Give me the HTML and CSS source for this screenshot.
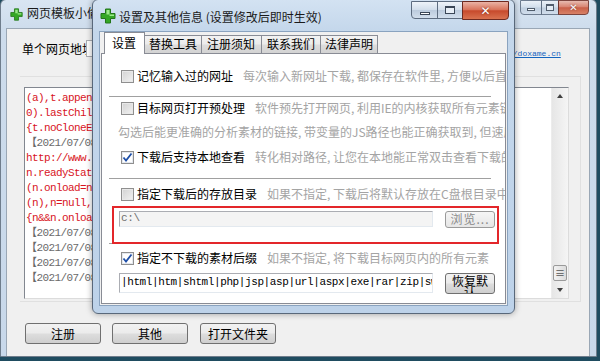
FILE: index.html
```html
<!DOCTYPE html>
<html>
	<head>
		<meta charset="utf-8">
		<title>网页模板小偷</title>
		<link rel="stylesheet" href="styles.css">
	</head>
	<body>
		<div class="desk">
			<!-- 主窗口 -->
			<div class="win main">
				<div class="caption">
					<svg class="ico" width="13" height="13" viewBox="0 0 16 16"><path d="M5.5 1h5v4.5H15v5h-4.5V15h-5v-4.5H1v-5h4.5z" fill="#34a724" stroke="#23761a"/><path d="M6.5 2h3v4.5h4.5v1.5H9.5V6.5h-3z" fill="#9be88a"/></svg>
					<span class="cap-text">网页模板小偷 v3.0</span>
					<div class="cap-btns small">
						<span class="cb-min"><i></i></span>
						<span class="cb-max"><i></i></span>
						<span class="cb-close">✕</span>
					</div>
				</div>
				<div class="client">
					<div class="url-row">
						<span class="url-label">单个网页地址</span>
						<span class="url-input"></span>
						<a class="url-link" href="javascript:;">http://doxame.cn</a>
					</div>
					<div class="log-group">
						<div class="log">
							<div class="log-text">
								<p class="red">(a),t.appendChild(s),e.getElementsByTagName("td"),n.style.cssText</p>
								<p class="red">0).lastChild.checked,t.innerHTML="&lt;textarea&gt;x&lt;/textarea&gt;"</p>
								<p class="red">{t.noCloneEvent=!1}),t.cloneNode(!0).click()</p>
								<p class="gray">【2021/07/08 10:21:33】下载完成</p>
								<p class="red">http://www.doxame.cn/js/jquery.min.js</p>
								<p class="red">n.readyState&amp;&amp;!/loaded|complete/.test(n.readyState)</p>
								<p class="red">(n.onload=n.onreadystatechange=null,o&amp;&amp;n.parentNode</p>
								<p class="red">(n),n=null,i||r(200,"success"))},n.src=e.url,o.insertBefore(n,o.firstChild)</p>
								<p class="red">{n&amp;&amp;n.onload(void 0,!0)}}}})</p>
								<p class="gray">【2021/07/08 10:21:34】下载完成</p>
								<p class="gray">【2021/07/08 10:21:34】下载完成</p>
								<p class="gray">【2021/07/08 10:21:35】下载完成</p>
								<p class="gray">【2021/07/08 10:21:35】全部完成</p>
							</div>
							<div class="vscroll">
								<span class="arrow up"></span>
								<span class="track"><span class="thumb">≡</span></span>
								<span class="arrow down"></span>
							</div>
						</div>
					</div>
					<div class="btn-row">
						<button class="btn">注册</button>
						<button class="btn">其他</button>
						<button class="btn">打开文件夹</button>
					</div>
				</div>
			</div>

			<!-- 设置对话框 -->
			<div class="win dlg">
				<div class="caption">
					<svg class="ico" width="16" height="16" viewBox="0 0 16 16"><path d="M5.5 1h5v4.5H15v5h-4.5V15h-5v-4.5H1v-5h4.5z" fill="#34a724" stroke="#23761a"/><path d="M6.5 2h3v4.5h4.5v1.5H9.5V6.5h-3z" fill="#9be88a"/></svg>
					<span class="cap-text">设置及其他信息 (设置修改后即时生效)</span>
					<div class="cap-btns">
						<span class="cb-min"><i></i></span>
						<span class="cb-max"><i></i></span>
						<span class="cb-close">✕</span>
					</div>
				</div>
				<div class="dlg-client">
					<div class="tabs">
						<span class="tab on">设置</span>
						<span class="tab">替换工具</span>
						<span class="tab">注册须知</span>
						<span class="tab">联系我们</span>
						<span class="tab">法律声明</span>
					</div>
					<div class="panel">
						<div class="row r1">
							<span class="chk"></span>
							<span class="lbl">记忆输入过的网址</span>
							<span class="desc">每次输入新网址下载, 都保存在软件里, 方便以后直接选择</span>
						</div>
						<div class="sep s1"></div>
						<div class="row r2">
							<span class="chk"></span>
							<span class="lbl">目标网页打开预处理</span>
							<span class="desc">软件预先打开网页, 利用IE的内核获取所有元素链接,</span>
						</div>
						<div class="desc-more">勾选后能更准确的分析素材的链接, 带变量的JS路径也能正确获取到, 但速度会慢一些<br>建议默认勾选此项</div>
						<div class="row r3">
							<span class="chk on"><svg width="11" height="11" viewBox="0 0 11 11"><path d="M1.5 5.5l2.5 3L9.5 1.5" fill="none" stroke="#1e4fa8" stroke-width="1.8"/></svg></span>
							<span class="lbl">下载后支持本地查看</span>
							<span class="desc">转化相对路径, 让您在本地能正常双击查看下载的网页</span>
						</div>
						<div class="sep s2"></div>
						<div class="row r4">
							<span class="chk"></span>
							<span class="lbl">指定下载后的存放目录</span>
							<span class="desc">如果不指定, 下载后将默认存放在C盘根目录中</span>
						</div>
						<div class="field-row f1">
							<span class="field off">c:\</span>
							<span class="sbtn off">浏览...</span>
						</div>
						<div class="sep s3"></div>
						<div class="row r5">
							<span class="chk on"><svg width="11" height="11" viewBox="0 0 11 11"><path d="M1.5 5.5l2.5 3L9.5 1.5" fill="none" stroke="#1e4fa8" stroke-width="1.8"/></svg></span>
							<span class="lbl">指定不下载的素材后缀</span>
							<span class="desc">如果不指定, 将下载目标网页内的所有元素</span>
						</div>
						<div class="field-row f2">
							<span class="field">|html|htm|shtml|php|jsp|asp|url|aspx|exe|rar|zip|swf|</span>
							<span class="sbtn wrap">恢复默认</span>
						</div>
						<div class="mark"></div>
					</div>
				</div>
			</div>
		</div>
	</body>
</html>
```

FILE: styles.css
```css
*{
	margin: 0;
	padding: 0;
	box-sizing: border-box;
}
body{
	width: 600px;
	height: 361px;
	overflow: hidden;
	font-family: "Noto Sans CJK SC", sans-serif;
	font-size: 12px;
	color: #000;
	background: #1f4c60;
}
.desk{
	position: relative;
	width: 600px;
	height: 361px;
}

/* 窗口外框 */
.win{
	position: absolute;
	display: flex;
	flex-direction: column;
	border: 1px solid #6f7d8c;
	border-radius: 6px 6px 0 0;
	background: linear-gradient(#d9e5f2, #cddcec 30px, #c8d8ea);
}
.main{
	left: 0;
	top: -1px;
	width: 597px;
	height: 358px;
	padding: 0 6px 0 5px;
}
.dlg{
	left: 92px;
	top: -1px;
	width: 423px;
	height: 315px;
	padding: 0 6px 7px 6px;
	border-color: #59687a;
	border-radius: 6px;
	box-shadow: 0 0 6px rgba(0,0,0,0.35);
	background: linear-gradient(#d3e2f2, #c4d7eb 31px, #bdd2e9);
}
.caption{
	display: flex;
	align-items: center;
	flex-shrink: 0;
}
.main .caption{
	height: 28px;
	padding-left: 4px;
}
.dlg .caption{
	height: 31px;
	padding-left: 1px;
}
.ico{
	flex-shrink: 0;
}
.cap-text{
	margin-left: 4px;
	white-space: nowrap;
	line-height: 14px;
	color: #1a1a1a;
}
.main .cap-text{
	margin-top: -2px;
}
.dlg .cap-text{
	margin-left: 3px;
	margin-top: 2px;
}

/* 标题栏按钮 */
.cap-btns{
	display: flex;
	margin-left: auto;
	align-self: flex-start;
	margin-top: 1px;
	margin-right: -1px;
}
.cap-btns span{
	display: flex;
	align-items: center;
	justify-content: center;
	height: 18px;
	border: 1px solid #5d6c80;
	margin-left: -1px;
	background: linear-gradient(#eef3f9, #d2deeb 48%, #bccbdd 52%, #d2deec);
}
.cb-min{
	width: 27px;
	border-radius: 0 0 0 4px;
}
.cb-min i{
	width: 10px;
	height: 3px;
	margin-top: 6px;
	border: 1px solid #3a4656;
	background: #fff;
}
.cb-max{
	width: 26px;
}
.cb-max i{
	width: 10px;
	height: 8px;
	border: 1px solid #3a4656;
	border-top-width: 2px;
	background: #e7eef6;
}
.cap-btns .cb-close{
	width: 47px;
	height: 19px;
	border-color: #6e2a20;
	border-radius: 0 0 4px 0;
	background: linear-gradient(#eab3a5, #d9755d 45%, #c74a2c 52%, #d97250);
	color: #fff;
	font-family: "DejaVu Sans", sans-serif;
	font-size: 12px;
	font-weight: bold;
	text-shadow: 0 0 2px #6a1a0a;
}
.small{
	margin-top: 0;
	margin-right: 1px;
}
.small span{
	height: 15px;
	opacity: 0.85;
}
.small .cb-min{
	width: 22px;
}
.small .cb-max{
	width: 18px;
}
.small .cb-max i{
	width: 8px;
	height: 7px;
}
.small .cb-min i{
	width: 8px;
	margin-top: 4px;
}
.cap-btns.small .cb-close{
	width: 31px;
	height: 15px;
	font-size: 10px;
}

/* 主窗口内容 */
.client{
	flex: 1;
	background: #f0f0f0;
	border: 1px solid #9aa7b5;
	border-bottom: none;
}
.url-row{
	display: flex;
	align-items: center;
	height: 17px;
	margin-top: 11px;
	padding-left: 15px;
}
.url-label{
	width: 64px;
	overflow: hidden;
	white-space: nowrap;
	line-height: 14px;
}
.url-input{
	width: 386px;
	height: 17px;
	background: #fff;
	border: 1px solid #abadb3;
}
.url-link{
	margin-left: 12px;
	margin-top: 10px;
	font-family: "Liberation Mono", monospace;
	font-size: 8px;
	color: #1565c0;
}
.log-group{
	width: 561px;
	height: 226px;
	margin: 19px 0 0 13px;
	padding: 10px 0 0 4px;
	border: 1px solid #e0e0e0;
	border-left: none;
}
.log{
	display: flex;
	width: 545px;
	height: 212px;
	background: #fff;
	border: 1px solid #828790;
	border-right-color: #dcdcdc;
	border-bottom-color: #dcdcdc;
}
.log-text{
	flex: 1;
	overflow: hidden;
	padding: 3px 0 0 1px;
	font-family: "Liberation Mono", "Noto Sans CJK SC", monospace;
	font-size: 11px;
	letter-spacing: -0.6px;
	line-height: 15px;
	white-space: nowrap;
}
.red{
	color: #d8141e;
}
.gray{
	color: #6a6a6a;
}
.vscroll{
	display: flex;
	flex-direction: column;
	width: 17px;
	background: linear-gradient(90deg, #e6e6e6, #f5f5f5);
	border-left: 1px solid #ececec;
}
.arrow{
	display: flex;
	align-items: center;
	justify-content: center;
	height: 17px;
}
.arrow::after{
	content: "";
	border: 3px solid transparent;
}
.up::after{
	border-bottom: 4px solid #404040;
	margin-top: -4px;
}
.down::after{
	border-top: 4px solid #404040;
	margin-top: 4px;
}
.track{
	flex: 1;
	display: flex;
	flex-direction: column;
	justify-content: flex-end;
	padding: 0 1px;
}
.thumb{
	height: 16px;
	border: 1px solid #9a9a9a;
	border-radius: 2px;
	background: linear-gradient(90deg, #f2f2f2, #dcdcdc);
	color: #555;
	font-size: 10px;
	line-height: 13px;
	text-align: center;
}
.btn-row{
	display: flex;
	margin: 21px 0 0 18px;
}
.btn{
	width: 76px;
	height: 21px;
	margin-right: 11px;
	border: 1px solid #707070;
	border-radius: 3px;
	background: linear-gradient(#f2f2f2, #ebebeb 48%, #dddddd 52%, #cfcfcf);
	font-family: "Noto Sans CJK SC", sans-serif;
	font-size: 12px;
	line-height: 16px;
	color: #000;
}
.btn:nth-child(2){
	margin-right: 12px;
}

/* 对话框内容 */
.dlg-client{
	flex: 1;
	background: #f0f0f0;
	border: 1px solid #8aa3bf;
	padding: 0 1px 1px 1px;
	display: flex;
	flex-direction: column;
}
.tabs{
	display: flex;
	align-items: flex-end;
	height: 21px;
	padding-left: 3px;
	position: relative;
	z-index: 1;
}
.tab{
	height: 18px;
	margin-right: -1px;
	padding: 0 4px;
	border: 1px solid #898c95;
	border-bottom: none;
	background: linear-gradient(#f3f3f3, #ebebeb 48%, #dddddd 52%, #d3d3d3);
	line-height: 16px;
	white-space: nowrap;
}
.tab.on{
	height: 22px;
	margin-bottom: -1px;
	padding: 0 8px 0 7px;
	background: #fff;
	line-height: 20px;
	position: relative;
	z-index: 2;
}
.tab:nth-child(3){
	padding: 0 6px 0 5px;
}
.tab:nth-child(4){
	padding: 0 5px;
}
.panel{
	position: relative;
	flex: 1;
	overflow: hidden;
	background: #fff;
	border: 1px solid #898c95;
	padding-top: 10px;
}
.row{
	display: flex;
	align-items: center;
	height: 20px;
	padding-left: 19px;
	white-space: nowrap;
}
.r1{
	height: 24px;
}
.chk{
	flex-shrink: 0;
	display: flex;
	align-items: center;
	justify-content: center;
	width: 13px;
	height: 13px;
	border: 1px solid #8f8f8f;
	background: linear-gradient(135deg, #d2d2d2, #f2f2f2);
	box-shadow: inset 0 0 0 1px #e8e8e8;
}
.chk.on{
	background: #fff;
	box-shadow: inset 0 0 0 1px #e4e8ee;
}
.lbl{
	margin-left: 3px;
	line-height: 14px;
}
.desc{
	margin-left: 10px;
	color: #a4a4a4;
	line-height: 14px;
}
.desc-more{
	height: 15px;
	margin: 7px 0 0 16px;
	overflow: hidden;
	color: #a4a4a4;
	line-height: 14px;
	white-space: nowrap;
}
.r3{
	margin-top: 7px;
}
.sep{
	width: 382px;
	height: 2px;
	margin-left: 7px;
	border-top: 1px solid #a0a0a0;
	border-bottom: 1px solid #fff;
}
.s1{
	margin-top: 8px;
}
.s2{
	margin-top: 11px;
}
.s3{
	margin-top: 15px;
}
.r4{
	margin-top: 4px;
}
.r5{
	margin-top: 3px;
}
.field-row{
	display: flex;
	align-items: flex-start;
	padding-left: 17px;
}
.f1{
	margin-top: 7px;
}
.f2{
	margin-top: 5px;
}
.field{
	width: 314px;
	height: 20px;
	overflow: hidden;
	border: 1px solid #abadb3;
	border-right-color: #e3e9ef;
	border-bottom-color: #e3e9ef;
	padding-left: 1px;
	font-family: "Liberation Mono", monospace;
	font-size: 11px;
	letter-spacing: -0.4px;
	line-height: 17px;
	white-space: nowrap;
}
.field.off{
	height: 16px;
	line-height: 13px;
	background: #f4f4f4;
	color: #6d6d6d;
}
.sbtn{
	width: 50px;
	height: 17px;
	margin-left: 12px;
	border: 1px solid #9a9a9a;
	border-radius: 3px;
	background: linear-gradient(#f6f6f6, #e6e6e6);
	text-align: center;
	line-height: 14px;
	overflow: hidden;
}
.sbtn.off{
	color: #8a8a8a;
	letter-spacing: 1px;
}
.sbtn.wrap{
	height: 21px;
	padding: 1px 6px 0;
	border-color: #707070;
	background: linear-gradient(#f2f2f2, #ebebeb 48%, #dddddd 52%, #cfcfcf);
	line-height: 11px;
	font-size: 12px;
	word-break: break-all;
}

/* 红框标注 */
.mark{
	position: absolute;
	left: 10px;
	top: 152px;
	width: 387px;
	height: 38px;
	border: 2px solid #e3262a;
}
```
